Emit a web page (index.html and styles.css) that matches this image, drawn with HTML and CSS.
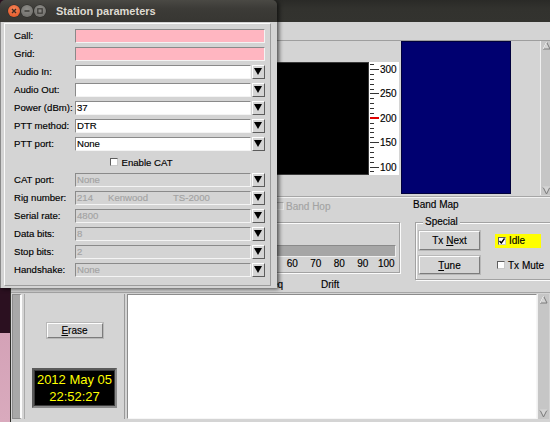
FILE: index.html
```html
<!DOCTYPE html>
<html>
<head>
<meta charset="utf-8">
<link rel="stylesheet" href="styles.css">
</head>
<body>
<div class="desktop">
  <div class="win main">
    <div class="main-title"></div>
    <div class="menubar"></div>

    <div class="top">
      <div class="wf"><div class="wf-canvas"></div></div>
      <div class="scale">
        <svg width="30" height="113" viewBox="0 0 30 113">
          <g stroke="#333" stroke-width="1">
            <line x1="1" y1="2.5" x2="5" y2="2.5"/>
            <line x1="1" y1="7.5" x2="10" y2="7.5"/>
            <line x1="1" y1="12.5" x2="5" y2="12.5"/>
            <line x1="1" y1="17.5" x2="5" y2="17.5"/>
            <line x1="1" y1="22.5" x2="5" y2="22.5"/>
            <line x1="1" y1="27.5" x2="5" y2="27.5"/>
            <line x1="1" y1="31.5" x2="10" y2="31.5"/>
            <line x1="1" y1="36.5" x2="5" y2="36.5"/>
            <line x1="1" y1="41.5" x2="5" y2="41.5"/>
            <line x1="1" y1="46.5" x2="5" y2="46.5"/>
            <line x1="1" y1="51.5" x2="5" y2="51.5"/>
            <line x1="1" y1="61.5" x2="5" y2="61.5"/>
            <line x1="1" y1="66.5" x2="5" y2="66.5"/>
            <line x1="1" y1="70.5" x2="5" y2="70.5"/>
            <line x1="1" y1="75.5" x2="5" y2="75.5"/>
            <line x1="1" y1="80.5" x2="10" y2="80.5"/>
            <line x1="1" y1="85.5" x2="5" y2="85.5"/>
            <line x1="1" y1="90.5" x2="5" y2="90.5"/>
            <line x1="1" y1="95.5" x2="5" y2="95.5"/>
            <line x1="1" y1="100.5" x2="5" y2="100.5"/>
            <line x1="1" y1="105.5" x2="10" y2="105.5"/>
            <line x1="1" y1="109.5" x2="5" y2="109.5"/>
          </g>
          <line x1="1" y1="56" x2="10" y2="56" stroke="#e00000" stroke-width="2"/>
          <g class="scale-txt">
            <text x="11" y="10.5">300</text>
            <text x="11" y="34.5">250</text>
            <text x="11" y="59.5">200</text>
            <text x="11" y="83.5">150</text>
            <text x="11" y="108.5">100</text>
          </g>
        </svg>
      </div>
      <div class="bandmap"></div>
      <div class="vscroll">
        <svg class="arr" width="9" height="9" viewBox="0 0 9 9"><polygon points="4.5,1 8,8 1,8" fill="#d4d4d4" stroke="#7a7a7a" stroke-width="1"/><polyline points="1,8 4.5,1" fill="none" stroke="#fff" stroke-width="1"/></svg>
        <svg class="arr" width="9" height="9" viewBox="0 0 9 9"><polygon points="1,1 8,1 4.5,8" fill="#d4d4d4" stroke="#7a7a7a" stroke-width="1"/><polyline points="1,1 8,1" fill="none" stroke="#fff" stroke-width="1"/></svg>
      </div>
    </div>

    <div class="ctrl">
      <div class="ctrl-left">
        <div class="bandhop"><span class="cb cb-dis"></span><span>Band Hop</span></div>
        <div class="group lvl-group">
          <div class="lvl-bar"></div>
          <div class="lvl-nums">
            <span>0</span><span>10</span><span>20</span><span>30</span><span>40</span><span>50</span><span>60</span><span>70</span><span>80</span><span>90</span><span>100</span>
          </div>
        </div>
        <div class="lower-labels"><span class="freq">Freq</span><span class="drift">Drift</span></div>
      </div>
      <div class="ctrl-right">
        <div class="bm-label">Band Map</div>
        <div class="group special">
          <span class="group-title">Special</span>
          <div class="special-grid">
            <div class="btn btn-tx"><span>Tx <u>N</u>ext</span></div>
            <div class="chk idle"><span class="cb"><svg width="6" height="6" viewBox="0 0 6 6"><polyline points="0.5,3 2.3,5 5.5,0.5" fill="none" stroke="#000" stroke-width="1.4"/></svg></span><span>Idle</span></div>
            <div class="btn btn-tune"><span><u>T</u>une</span></div>
            <div class="chk"><span class="cb"></span><span>Tx Mute</span></div>
          </div>
        </div>
      </div>
    </div>

    <div class="bottom">
      <div class="strip"></div>
      <div class="side">
        <div class="btn erase"><span><u>E</u>rase</span></div>
        <div class="clock"><span>2012 May 05</span><span>22:52:27</span></div>
      </div>
      <div class="textarea"></div>
      <div class="vscroll vscroll-b">
        <svg class="arr" width="9" height="9" viewBox="0 0 9 9"><polygon points="4.5,1 8,8 1,8" fill="#d4d4d4" stroke="#7a7a7a" stroke-width="1"/><polyline points="1,8 4.5,1" fill="none" stroke="#fff" stroke-width="1"/></svg>
        <svg class="arr" width="9" height="9" viewBox="0 0 9 9"><polygon points="1,1 8,1 4.5,8" fill="#d4d4d4" stroke="#7a7a7a" stroke-width="1"/><polyline points="1,1 8,1" fill="none" stroke="#fff" stroke-width="1"/></svg>
      </div>
    </div>
  </div>

  <div class="win dialog">
    <div class="dlg-title">
      <span class="wbtn close"><svg width="6" height="6" viewBox="0 0 6 6"><path d="M1 1L5 5M5 1L1 5" stroke="#3c2a22" stroke-width="1.4"/></svg></span>
      <span class="wbtn"><svg width="6" height="6" viewBox="0 0 6 6"><path d="M0.5 3H5.5" stroke="#3c3b37" stroke-width="1.4"/></svg></span>
      <span class="wbtn"><svg width="6" height="6" viewBox="0 0 6 6"><rect x="0.8" y="0.8" width="4.4" height="4.4" fill="none" stroke="#3c3b37" stroke-width="1.2"/></svg></span>
      <span class="dlg-name">Station parameters</span>
    </div>
    <div class="dlg-body">
      <div class="frame">
        <div class="form">
          <span class="lbl">Call:</span><div class="entry pink"></div>
          <span class="lbl">Grid:</span><div class="entry pink"></div>
          <span class="lbl">Audio In:</span><div class="combo"><div class="entry"></div><span class="dd"></span></div>
          <span class="lbl">Audio Out:</span><div class="combo"><div class="entry"></div><span class="dd"></span></div>
          <span class="lbl">Power (dBm):</span><div class="combo"><div class="entry">37</div><span class="dd"></span></div>
          <span class="lbl">PTT method:</span><div class="combo"><div class="entry">DTR</div><span class="dd"></span></div>
          <span class="lbl">PTT port:</span><div class="combo"><div class="entry">None</div><span class="dd"></span></div>
          <div class="cat-row"><span class="cb"></span><span>Enable CAT</span></div>
          <span class="lbl">CAT port:</span><div class="combo"><div class="entry dis">None</div><span class="dd"></span></div>
          <span class="lbl">Rig number:</span><div class="combo"><div class="entry dis"><span class="rig-a">214</span><span class="rig-b">Kenwood</span><span>TS-2000</span></div><span class="dd"></span></div>
          <span class="lbl">Serial rate:</span><div class="combo"><div class="entry dis">4800</div><span class="dd"></span></div>
          <span class="lbl">Data bits:</span><div class="combo"><div class="entry dis">8</div><span class="dd"></span></div>
          <span class="lbl">Stop bits:</span><div class="combo"><div class="entry dis">2</div><span class="dd"></span></div>
          <span class="lbl">Handshake:</span><div class="combo"><div class="entry dis">None</div><span class="dd"></span></div>
        </div>
      </div>
    </div>
  </div>
</div>
</body>
</html>
```

FILE: styles.css
```css
html, body {
  margin: 0;
  padding: 0;
}
body {
  width: 550px;
  height: 422px;
  overflow: hidden;
  font-family: "Liberation Sans", Arial, sans-serif;
  font-size: 10px;
  color: #000;
  -webkit-text-stroke: 0.15px currentColor;
}
.desktop {
  position: relative;
  width: 550px;
  height: 422px;
  overflow: hidden;
  background: linear-gradient(#2b1020 0, #2b1020 333px, #d4a2b7 333px, #d9aabd 422px);
}
.win {
  position: absolute;
  box-sizing: border-box;
}

/* ---------- main window ---------- */
.main {
  left: 10px;
  top: 0;
  width: 540px;
  height: 422px;
  background: #d4d4d4;
  border-left: 1px solid #2f2f2b;
  display: flex;
  flex-direction: column;
  overflow: hidden;
}
.main-title {
  height: 22px;
  flex: none;
  background: linear-gradient(#2a2a27, #32322e 40%, #33332f);
}
.menubar {
  height: 18px;
  flex: none;
  border-bottom: 1px solid #9e9e9e;
}
.top {
  height: 155px;
  flex: none;
  display: flex;
  align-items: flex-start;
  border-bottom: 1px solid #a6a6a6;
  box-shadow: 0 1px 0 #f2f2f2;
  margin-bottom: 1px;
}
.wf {
  width: 358px;
  flex: none;
  padding-top: 21px;
}
.wf-canvas {
  margin-left: 9px;
  height: 113px;
  box-sizing: border-box;
  background: #000;
  border: 1px solid #3a3a3a;
}
.scale {
  width: 30px;
  height: 113px;
  margin-top: 21px;
  flex: none;
  background: #fff;
}
.scale svg { display: block; }
.scale-txt text {
  font-family: "Liberation Sans", Arial, sans-serif;
  font-size: 10px;
  fill: #000;
  stroke: #000;
  stroke-width: 0.15px;
}
.bandmap {
  width: 110px;
  height: 153px;
  margin-left: 2px;
  flex: none;
  box-sizing: border-box;
  background: #000070;
  border: 1px solid #00003c;
}
.vscroll {
  margin-left: 29px;
  width: 12px;
  height: 154px;
  flex: none;
  box-sizing: border-box;
  background: #c6c6c6;
  border-left: 1px solid #f0f0f0;
  display: flex;
  flex-direction: column;
  justify-content: space-between;
  padding: 0 0 0 1px;
}
.arr { display: block; }

/* ---------- controls row ---------- */
.ctrl {
  height: 94px;
  flex: none;
  display: flex;
}
.ctrl-left {
  width: 389px;
  flex: none;
  display: flex;
  flex-direction: column;
}
.bandhop {
  margin-top: 1px;
  height: 14px;
  padding-left: 265px;
  display: flex;
  align-items: center;
  gap: 2px;
  color: #a3a3a3;
}
.cb {
  width: 8px;
  height: 8px;
  box-sizing: border-box;
  background: #fff;
  border: 1px solid;
  border-color: #5e5e5e #c9c9c9 #c9c9c9 #5e5e5e;
  display: inline-flex;
  align-items: center;
  justify-content: center;
  flex: none;
}
.cb-dis {
  background: #d4d4d4;
  border-color: #a8a8a8 #e6e6e6 #e6e6e6 #a8a8a8;
}
.group {
  position: relative;
  box-sizing: border-box;
  border: 1px solid #a2a2a2;
  box-shadow: inset 1px 1px 0 #fbfbfb, 1px 1px 0 #fbfbfb;
}
.lvl-group {
  margin: 9px 0 0 5px;
  height: 51px;
  padding: 22px 3px 0 0;
}
.lvl-bar {
  height: 12px;
  box-sizing: border-box;
  background: #a6a6a6;
  border: 1px solid;
  border-color: #8a8a8a #eeeeee #eeeeee #8a8a8a;
}
.lvl-nums {
  display: flex;
  justify-content: flex-end;
  height: 14px;
  line-height: 14px;
  margin-right: -2px;
}
.lvl-nums span {
  width: 23.5px;
  text-align: center;
}
.lower-labels {
  margin-top: 6px;
  height: 12px;
  line-height: 12px;
  display: flex;
}
.freq {
  width: 272px;
  text-align: right;
}
.drift {
  margin-left: 38px;
}
.ctrl-right {
  flex: 1;
  padding-left: 15px;
  display: flex;
  flex-direction: column;
}
.bm-label {
  margin-top: 1px;
  height: 12px;
  line-height: 12px;
  margin-left: -2px;
}
.special {
  margin-top: 11px;
  height: 58px;
  margin-right: -10px;
  padding: 8px 0 0 3px;
}
.group-title {
  position: absolute;
  left: 7px;
  top: -7px;
  padding: 0 2px;
  line-height: 12px;
  background: #d4d4d4;
}
.special-grid {
  display: grid;
  grid-template-columns: 61px auto;
  grid-template-rows: 19px 18px;
  column-gap: 15px;
  row-gap: 6px;
  align-items: center;
}
.btn {
  box-sizing: border-box;
  border: 1px solid;
  border-color: #fdfdfd #7c7c7c #7c7c7c #fdfdfd;
  box-shadow: 0 0 0 1px #b8b8b8;
  background: #d4d4d4;
  display: flex;
  align-items: center;
  justify-content: center;
  white-space: nowrap;
}
.btn-tx { height: 19px; }
.btn-tune { height: 18px; }
.chk {
  display: flex;
  align-items: center;
  gap: 3px;
  height: 14px;
  white-space: nowrap;
  padding-left: 3px;
}
.chk:not(.idle) { padding-left: 2px; }
.idle {
  background: #ffff00;
  width: 46px;
  box-sizing: border-box;
}

/* ---------- bottom area ---------- */
.bottom {
  height: 130px;
  flex: none;
  box-sizing: border-box;
  padding: 1px 0 3px 1px;
  display: flex;
  border-top: 1px solid #a6a6a6;
}
.strip {
  width: 10px;
  flex: none;
  box-sizing: border-box;
  background: #a8a8a8;
  border: 1px solid #8d8d8d;
  border-right: 2px solid #fbfbfb;
}
.side {
  width: 101px;
  margin-left: 2px;
  flex: none;
  box-sizing: border-box;
  border-left: 1px solid #a9a9a9;
  border-right: 1px solid #9a9a9a;
  display: flex;
  flex-direction: column;
  align-items: center;
  padding-top: 29px;
  gap: 30px;
}
.erase {
  width: 56px;
  height: 15px;
}
.clock {
  width: 85px;
  height: 40px;
  box-sizing: border-box;
  background: #000;
  border: 2px solid;
  border-color: #5a5a5a #8a8a8a #8a8a8a #5a5a5a;
  outline: 1px solid #3a3a3a;
  outline-offset: -3px;
  color: #ffff00;
  font-size: 13px;
  -webkit-text-stroke: 0;
  display: flex;
  flex-direction: column;
  align-items: center;
  justify-content: center;
  line-height: 17px;
}
.textarea {
  margin-left: 2px;
  width: 410px;
  flex: none;
  box-sizing: border-box;
  background: #fff;
  border: 1px solid;
  border-color: #8c8c8c #f6f6f6 #f6f6f6 #8c8c8c;
}
.vscroll-b {
  margin-left: 0;
  height: auto;
  padding-top: 1px;
  padding-bottom: 1px;
}

/* ---------- dialog ---------- */
.dialog {
  left: 0;
  top: 0;
  width: 277px;
  height: 288px;
  border-radius: 5px 5px 0 0;
  box-shadow: 2px 1px 4px rgba(0, 0, 0, 0.65);
  overflow: hidden;
  display: flex;
  flex-direction: column;
}
.dlg-title {
  height: 22px;
  flex: none;
  background: linear-gradient(#4a4944, #3c3b37 40%, #373632);
  display: flex;
  align-items: center;
  padding-left: 8px;
  gap: 1px;
}
.wbtn {
  width: 12px;
  height: 12px;
  border-radius: 50%;
  background: radial-gradient(circle at 50% 35%, #8e8d89, #6a6965);
  display: inline-flex;
  align-items: center;
  justify-content: center;
  box-shadow: 0 0 0 0.5px #2a2a27;
}
.wbtn.close {
  background: radial-gradient(circle at 50% 35%, #f7875a, #df4f1f);
}
.wbtn svg { display: block; }
.dlg-name {
  margin-left: 9px;
  color: #dfdbd2;
  font-weight: bold;
  font-size: 11px;
  -webkit-text-stroke: 0;
}
.dlg-body {
  flex: 1;
  background: #d4d4d4;
  box-sizing: border-box;
  padding: 1px 6px 2px 3px;
  border-left: 1px solid #8a8a8a;
  display: flex;
}
.frame {
  flex: 1;
  box-sizing: border-box;
  border: 1px solid;
  border-color: #fbfbfb #9c9c9c #9c9c9c #fbfbfb;
  padding: 5px 0 0 9px;
}
.form {
  display: grid;
  grid-template-columns: 61px 190px;
  grid-auto-rows: 14px;
  row-gap: 4px;
  align-items: center;
  font-size: 9.6px;
}
.lbl {
  white-space: nowrap;
  line-height: 14px;
}
.entry {
  height: 14px;
  box-sizing: border-box;
  background: #fff;
  border: 1px solid;
  border-color: #8a8a8a #f4f4f4 #f4f4f4 #8a8a8a;
  padding-left: 1px;
  line-height: 12px;
  white-space: nowrap;
  overflow: hidden;
}
.pink { background: #ffb6c1; }
.dis {
  background: #d4d4d4;
  color: #a3a3a3;
}
.combo {
  display: flex;
  height: 14px;
  gap: 1px;
}
.combo .entry { flex: 1; }
.dd {
  width: 13px;
  height: 14px;
  box-sizing: border-box;
  flex: none;
  border: 1px solid;
  border-color: #fdfdfd #5c5c5c #5c5c5c #fdfdfd;
  background: #d4d4d4;
  position: relative;
}
.dd::after {
  content: "";
  position: absolute;
  left: 1px;
  top: 2px;
  border-style: solid;
  border-width: 7px 4.5px 0 4.5px;
  border-color: #000 transparent transparent transparent;
}
.rig-a {
  display: inline-block;
  width: 31px;
}
.rig-b {
  display: inline-block;
  width: 65px;
}
.cat-row {
  grid-column: 1 / -1;
  display: flex;
  justify-content: center;
  align-items: center;
  gap: 3px;
  padding-left: 4px;
}
```
